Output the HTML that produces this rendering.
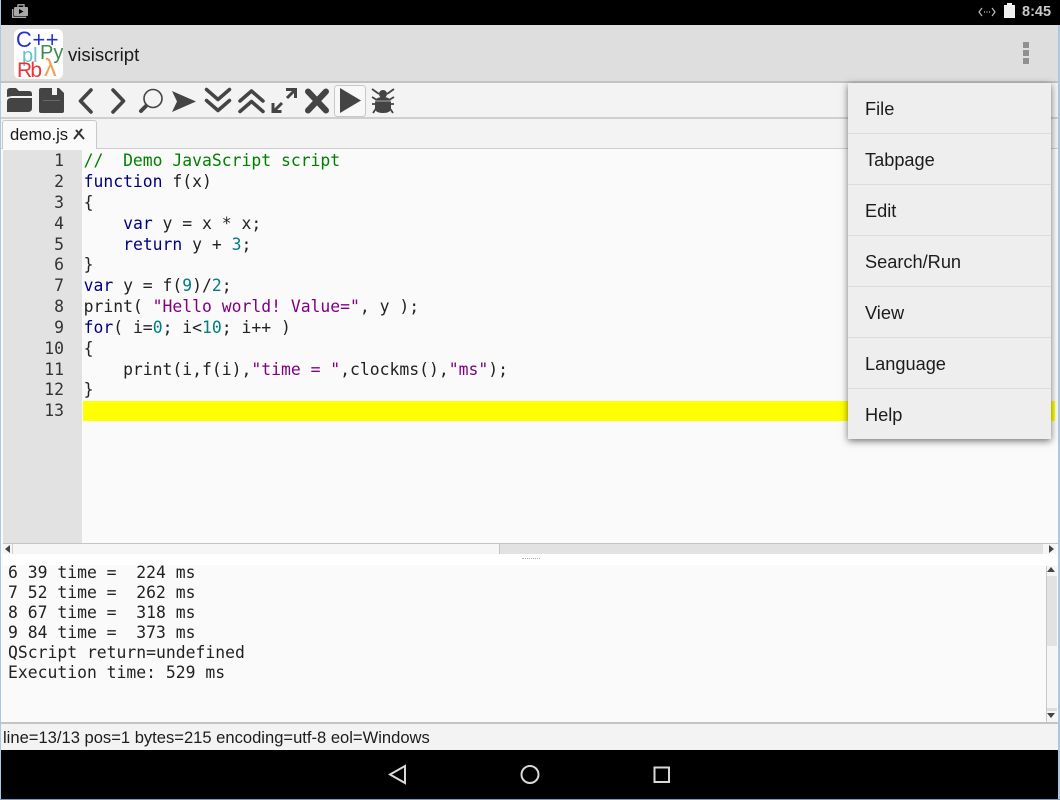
<!DOCTYPE html>
<html><head><meta charset="utf-8"><style>
html,body{margin:0;padding:0;background:#fff}
#r{position:relative;width:1060px;height:800px;overflow:hidden;background:#fafafa;font-family:"Liberation Sans",sans-serif;color:#222}
.a{position:absolute}
.m{font-family:"DejaVu Sans Mono",monospace;font-size:16.4px;white-space:pre;line-height:20px}
.c{left:83.6px;color:#222}
.n{width:64px;left:0;text-align:right;color:#333}
.k{color:#000080}.g{color:#008000}.t{color:#008080}.s{color:#800080}
.mi{left:17px;font-size:18.2px;line-height:20px;color:#1c1c1c;white-space:pre}
.sep{left:0;width:203px;height:1px;background:#dcdcdc}
</style></head><body><div id="r">
<div class="a" style="left:0;top:0;width:1060px;height:25px;background:#000"></div>
<svg class="a" style="left:10px;top:2px" width="20" height="18" viewBox="0 0 20 18"><path d="M8 5V2.800h6V5" fill="none" stroke="#a8a8a8" stroke-width="1.400"/><rect x="4" y="5" width="14" height="9" rx="1" fill="#a8a8a8"/><path d="M2.700 7v8.300h13.500" fill="none" stroke="#a8a8a8" stroke-width="1.400"/><path d="M9 7l4.500 2.500L9 12z" fill="#000"/></svg>
<svg class="a" style="left:978px;top:5px" width="18" height="14" viewBox="0 0 18 14"><path d="M4 3L1 7l3 4M14 3l3 4-3 4" fill="none" stroke="#bbb" stroke-width="1.200"/><path d="M6 7h1M8.500 7h1M11 7h1" stroke="#bbb" stroke-width="1.300"/></svg>
<div class="a" style="left:1004px;top:5px;width:11px;height:13px;background:#f0f0f0"></div><div class="a" style="left:1007px;top:3px;width:5px;height:2px;background:#f0f0f0"></div>
<div class="a" style="left:1022px;top:4px;font-size:14.500px;line-height:17px;font-weight:bold;color:#c8c8c8">8:45</div>

<div class="a" style="left:0;top:25px;width:1060px;height:57px;background:#dedede"></div>
<div class="a" style="left:0;top:81px;width:1060px;height:2px;background:#c2c2c2"></div>
<div class="a" style="left:14px;top:29px;width:49px;height:50px;background:#fff;border-radius:6px;overflow:hidden">
<div class="a" style="left:2px;top:-1px;font-size:22px;line-height:24px;letter-spacing:.5px;color:#2233cc;white-space:pre">C++</div>
<div class="a" style="left:8px;top:16px;font-size:20px;line-height:22px;color:#66c4c8">pl</div>
<div class="a" style="left:26px;top:13px;font-size:20px;line-height:22px;color:#3c8c4c">Py</div>
<div class="a" style="left:3px;top:30px;font-size:21px;line-height:23px;letter-spacing:-1.800px;color:#ee3333">Rb</div>
<div class="a" style="left:30px;top:26px;font-size:25px;line-height:26px;color:#f0a050">λ</div>
</div>
<div class="a" style="left:68px;top:44px;font-size:18.600px;line-height:22px;color:#1a1a1a">visiscript</div>
<div class="a" style="left:1023px;top:42px;width:6px;height:6px;background:#909090"></div>
<div class="a" style="left:1023px;top:50px;width:6px;height:6px;background:#909090"></div>
<div class="a" style="left:1023px;top:58px;width:6px;height:6px;background:#909090"></div>

<div class="a" style="left:0;top:83px;width:1060px;height:35px;background:#f3f3f3"></div>
<div class="a" style="left:0;top:117px;width:1060px;height:2px;background:#cfcfcf"></div>
<svg class="a" style="left:0;top:83px" width="410" height="36" viewBox="0 0 410 36" fill="#444">
<path d="M7 14V8q0-3 3-3h6l3 3h10q3 0 3 3v2H12z"/>
<path d="M7 29V19q0-4 4-4h21v10q0 4-4 4z"/>
<path d="M39 7q0-2 2-2h18l5 5v18q0 2-2 2H41q-2 0-2-2z"/>
<rect x="52" y="5" width="5" height="7" fill="#f3f3f3"/><rect x="43" y="17" width="17" height="1" fill="#6a6a6a"/>
<path d="M91 7L80.500 18 91 29M113 7l10.500 11L113 29" fill="none" stroke="#444" stroke-width="3.600" stroke-linejoin="round" stroke-linecap="round"/>
<circle cx="153" cy="15.500" r="9" fill="none" stroke="#444" stroke-width="1.600"/><path d="M146 23l-5 5" stroke="#444" stroke-width="4" stroke-linecap="round"/>
<path d="M172 8l24 10.500L172 29l5-10.500z"/>
<path d="M206.500 6.500l11.500 10 11.500-10M206.500 17.500l11.500 10 11.500-10M240 18l11.500-10 11.500 10M240 28.500l11.500-10 11.500 10" fill="none" stroke="#444" stroke-width="3.500" stroke-linecap="round" stroke-linejoin="round"/>
<path d="M274 28l8-8M287 15l8-8" stroke="#444" stroke-width="3" fill="none"/><path d="M273 20v8.500h8.500M286 6.500h9.500V15" fill="none" stroke="#444" stroke-width="3"/>
<path d="M308 8.500l18 19M326 8.500l-18 19" stroke="#444" stroke-width="6" stroke-linecap="round"/>
<rect x="334.500" y="2.500" width="31" height="31" rx="3" fill="#f8f8f8" stroke="#c8c8c8"/>
<path d="M340 5l21 12.500L340 30z"/>
<path d="M375 20q0-6 8-6t8 6v5q0 5-8 5t-8-5z"/><circle cx="383" cy="11" r="4"/><path d="M372 6l7 5M394 6l-7 5M372 14l5 3M394 14l-5 3M372 21h5M394 21h-5M373 30l4-6M393 30l-4-6" stroke="#444" stroke-width="1.800" fill="none"/><path d="M375 18h16" stroke="#aaa"/>
</svg>

<div class="a" style="left:0;top:119px;width:1060px;height:30px;background:#f3f3f3"></div>
<div class="a" style="left:0;top:148px;width:1060px;height:1px;background:#cdcdcd"></div>
<div class="a" style="left:2px;top:120px;width:95px;height:29px;background:#fafafa;border:1px solid #c8c8c8;border-bottom:0;border-radius:3px 3px 0 0;box-sizing:border-box"></div>
<div class="a" style="left:10px;top:125px;font-size:16.600px;line-height:20px;color:#1a1a1a">demo.js</div>
<svg class="a" style="left:72px;top:127px" width="14" height="14" viewBox="0 0 14 14"><path d="M2 12L10 2M4 3l8 9" stroke="#333" stroke-width="2"/></svg>

<div class="a" style="left:3px;top:150px;width:79px;height:393px;background:#e2e2e2"></div>
<div class="a" style="left:83px;top:401px;width:972px;height:20px;background:#ffff00"></div>
<div class="a m n" style="top:151px">1</div><div class="a m n" style="top:172px">2</div><div class="a m n" style="top:193px">3</div><div class="a m n" style="top:214px">4</div><div class="a m n" style="top:235px">5</div><div class="a m n" style="top:255px">6</div><div class="a m n" style="top:276px">7</div><div class="a m n" style="top:297px">8</div><div class="a m n" style="top:318px">9</div><div class="a m n" style="top:339px">10</div><div class="a m n" style="top:360px">11</div><div class="a m n" style="top:380px">12</div><div class="a m n" style="top:401px">13</div>
<div class="a m c g" style="top:151px">//  Demo JavaScript script</div>
<div class="a m c" style="top:172px"><span class="k">function</span> f(x)</div>
<div class="a m c" style="top:193px">{</div>
<div class="a m c" style="top:214px">    <span class="k">var</span> y = x * x;</div>
<div class="a m c" style="top:235px">    <span class="k">return</span> y + <span class="t">3</span>;</div>
<div class="a m c" style="top:255px">}</div>
<div class="a m c" style="top:276px"><span class="k">var</span> y = f(<span class="t">9</span>)/<span class="t">2</span>;</div>
<div class="a m c" style="top:297px">print( <span class="s">"Hello world! Value="</span>, y );</div>
<div class="a m c" style="top:318px"><span class="k">for</span>( i=<span class="t">0</span>; i&lt;<span class="t">10</span>; i++ )</div>
<div class="a m c" style="top:339px">{</div>
<div class="a m c" style="top:360px">    print(i,f(i),<span class="s">"time = "</span>,clockms(),<span class="s">"ms"</span>);</div>
<div class="a m c" style="top:380px">}</div>

<div class="a" style="left:3px;top:543px;width:1055px;height:1px;background:#c4c4c4"></div>
<div class="a" style="left:3px;top:544px;width:1053px;height:10px;background:#f6f6f6"></div>
<div class="a" style="left:12px;top:544px;width:1px;height:10px;background:#d0d0d0"></div>
<div class="a" style="left:499px;top:544px;width:544px;height:10px;background:#e2e2e2;border-left:1px solid #c4c4c4;box-sizing:border-box"></div>
<div class="a" style="left:5px;top:545px;border:4px solid transparent;border-right:5px solid #444;border-left:0"></div>
<div class="a" style="left:1049px;top:545px;border:4px solid transparent;border-left:5px solid #444;border-right:0"></div>
<div class="a" style="left:3px;top:554px;width:1055px;height:11px;background:#fff"></div>
<div class="a" style="left:522px;top:558px;width:18px;height:1px;border-top:1px dotted #b0b0b0"></div>

<div class="a m" style="left:8px;top:563px;line-height:19.900px;color:#222">6 39 time =  224 ms
7 52 time =  262 ms
8 67 time =  318 ms
9 84 time =  373 ms
QScript return=undefined
Execution time: 529 ms</div>
<div class="a" style="left:1046px;top:566px;width:11px;height:157px;background:#f5f5f5;border-left:1px solid #c8c8c8;box-sizing:border-box"></div>
<div class="a" style="left:1047px;top:576px;width:10px;height:70px;background:#e2e2e2"></div>
<div class="a" style="left:1047px;top:708px;width:10px;height:3px;background:#dcdcdc"></div>
<div class="a" style="left:1047px;top:567px;border:4px solid transparent;border-bottom:5px solid #444;border-top:0"></div>
<div class="a" style="left:1047px;top:713px;border:4px solid transparent;border-top:5px solid #444;border-bottom:0"></div>

<div class="a" style="left:0;top:722px;width:1060px;height:2px;background:#c4c4c4"></div>
<div class="a" style="left:0;top:724px;width:1060px;height:26px;background:#f3f3f3"></div>
<div class="a" style="left:3px;top:728px;font-size:16.570px;line-height:20px;color:#1c1c1c;white-space:pre">line=13/13 pos=1 bytes=215 encoding=utf-8 eol=Windows</div>

<div class="a" style="left:0;top:750px;width:1060px;height:49px;background:#000"></div>
<svg class="a" style="left:380px;top:760px" width="300" height="30" viewBox="0 0 300 30" fill="none" stroke="#d8d8d8" stroke-width="2"><path d="M25 6L10 14.500 25 23z"/><circle cx="150" cy="14.500" r="8.500"/><rect x="274.500" y="7.500" width="14.500" height="14.500"/></svg>

<div class="a" style="left:0;top:0;width:1px;height:800px;background:#a8c8e8"></div>
<div class="a" style="left:1058px;top:25px;width:2px;height:775px;background:#a8c8e8"></div>
<div class="a" style="left:0;top:799px;width:1060px;height:1px;background:#6aa0d0"></div>

<div class="a" style="left:848px;top:83px;width:203px;height:356px;background:#eeeeee;box-shadow:0 2px 7px rgba(0,0,0,.55)">
<div class="a mi" style="top:16px">File</div><div class="a sep" style="top:50px"></div>
<div class="a mi" style="top:67px">Tabpage</div><div class="a sep" style="top:101px"></div>
<div class="a mi" style="top:118px">Edit</div><div class="a sep" style="top:152px"></div>
<div class="a mi" style="top:169px">Search/Run</div><div class="a sep" style="top:203px"></div>
<div class="a mi" style="top:220px">View</div><div class="a sep" style="top:254px"></div>
<div class="a mi" style="top:271px">Language</div><div class="a sep" style="top:305px"></div>
<div class="a mi" style="top:322px">Help</div>
</div>
</div></body></html>
